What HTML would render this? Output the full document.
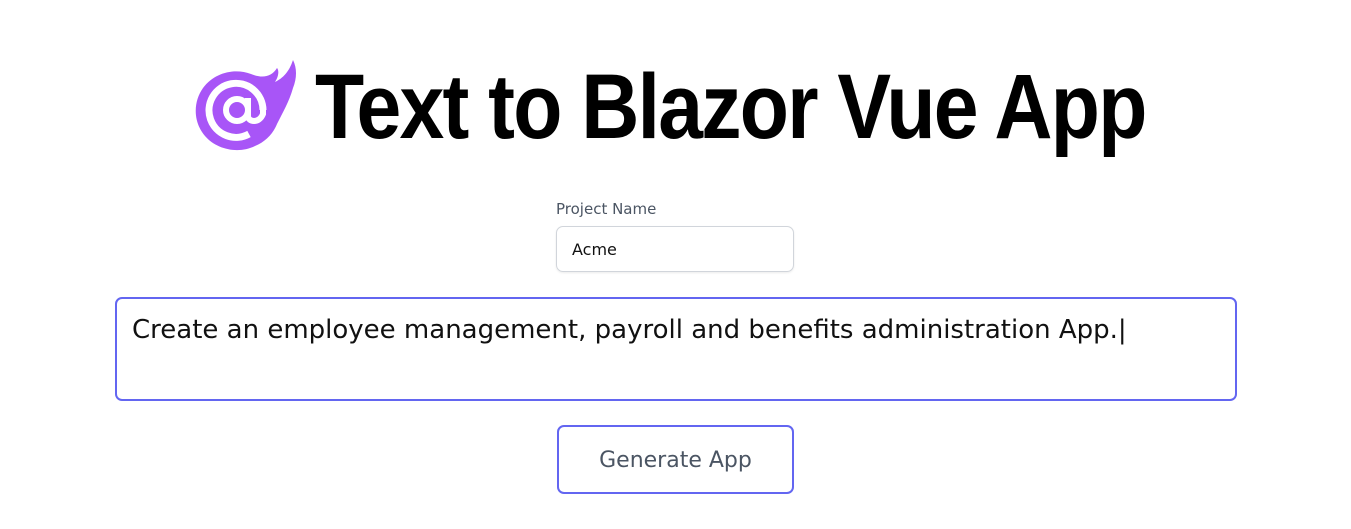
<!DOCTYPE html>
<html><head><style>
body{margin:0;width:1351px;height:529px;background:#fff;position:relative;font-family:"DejaVu Sans","Liberation Sans",sans-serif;overflow:hidden}
.abs{position:absolute}
#title{left:315px;top:52px;font-family:"Liberation Sans",sans-serif;font-weight:bold;font-size:92px;line-height:110px;color:#000;white-space:nowrap;transform-origin:0 0;transform:scaleX(0.875);letter-spacing:-2px}
#lbl{left:556px;top:200px;font-size:15px;color:#4b5563}
#inp{left:556px;top:226px;width:238px;height:46px;border:1px solid #d1d5db;border-radius:7px;box-shadow:0 1px 2px rgba(0,0,0,.08);box-sizing:border-box}
#inp span{position:absolute;left:15px;top:13px;font-size:16px;color:#111}
#ta{left:115px;top:297px;width:1122px;height:104px;border:2px solid #6366f1;border-radius:7px;box-sizing:border-box}
#ta span{position:absolute;left:15px;top:16px;font-size:26px;color:#111;white-space:nowrap}
#btn{left:557px;top:425px;width:237px;height:69px;border:2px solid #6366f1;border-radius:7px;box-sizing:border-box;text-align:center;line-height:67px;font-size:22px;color:#4b5563}
</style></head><body>
<svg class="abs" style="left:193px;top:58px" width="106" height="96" viewBox="0 0 106 96">
<path d="M100 2 C96 14 90 20 82 24 C86 18 86 12 84 10 C78 20 68 20 58 16 C42 10 22 14 10 30 C0 44 0 64 12 78 C24 92 46 96 62 88 C72 84 80 76 84 66 C90 54 96 44 100 30 C104 20 104 10 100 2 Z" fill="#a855f7"/>
<path d="M70 52 A27 27 0 1 0 56 76" fill="none" stroke="#fff" stroke-width="7"/>
<circle cx="44" cy="52" r="11" fill="none" stroke="#fff" stroke-width="6"/>
<path d="M55 40 V58 C55 64 66 66 70 56 V52" fill="none" stroke="#fff" stroke-width="6"/>
</svg>
<div id="title" class="abs">Text to Blazor Vue App</div>
<div id="lbl" class="abs">Project Name</div>
<div id="inp" class="abs"><span>Acme</span></div>
<div id="ta" class="abs"><span>Create an employee management, payroll and benefits administration App.|</span></div>
<div id="btn" class="abs">Generate App</div>
</body></html>
